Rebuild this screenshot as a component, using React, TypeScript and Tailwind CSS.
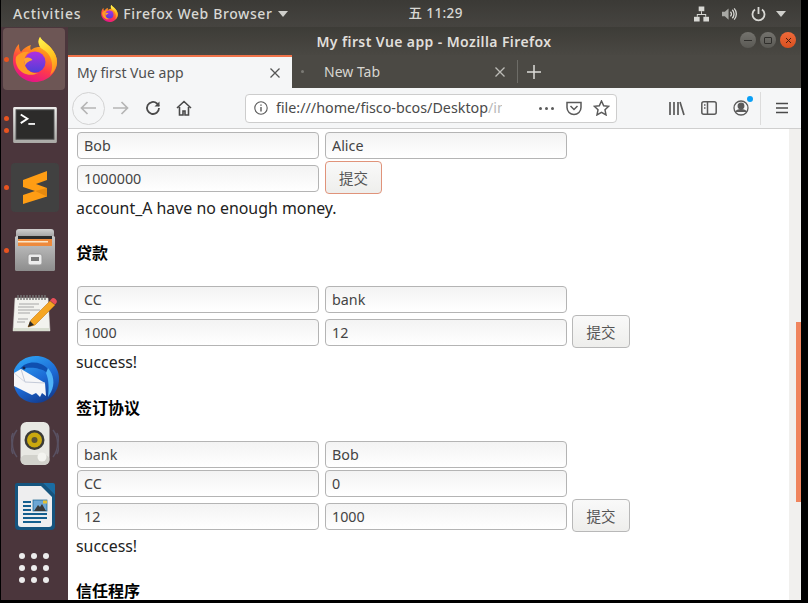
import type { ReactNode } from "react";

const uiFont = "font-['Noto_Sans','Noto_Sans_CJK_SC',sans-serif]";

function FirefoxLogo({ width, height, id }: { width: number; height: number; id: string }) {
  return (
    <svg width={width} height={height} viewBox="0 0 44 45">
      <defs>
        <linearGradient id={`${id}a`} x1="0.75" y1="0" x2="0.35" y2="1">
          <stop offset="0" stopColor="#ffd52e" />
          <stop offset="0.35" stopColor="#ff8a1f" />
          <stop offset="0.65" stopColor="#ff3b4a" />
          <stop offset="1" stopColor="#e3128c" />
        </linearGradient>
        <linearGradient id={`${id}b`} x1="0.5" y1="0" x2="0.5" y2="1">
          <stop offset="0" stopColor="#b02fe0" />
          <stop offset="1" stopColor="#4f3fd8" />
        </linearGradient>
        <linearGradient id={`${id}c`} x1="0.4" y1="0" x2="0.7" y2="1">
          <stop offset="0" stopColor="#fff04a" />
          <stop offset="0.55" stopColor="#ffc21f" />
          <stop offset="1" stopColor="#ff8a1f" />
        </linearGradient>
      </defs>
      <path
        d="M6 7C6 11 6.500 13 8 15C11 11 14 9 18 8C17 10 17 12 18 13C22 10 24 10 27 10C25 6 25 3 27 0C30 5 34 6 38 11C42 16 44 20 44 25C44 36 34 45 22 45C10 45 0 35 0 24C0 17 2 11 6 7Z"
        fill={`url(#${id}a)`}
      />
      <path d="M27 0C30 5 34 6 38 11C42 16 44 20 44 25C44 30 41 35 37 38C40 32 40 24 36 18C33 13 28 12 27 10C25 6 25 3 27 0Z" fill={`url(#${id}c)`} />
      <path d="M3 20C6 16 11 14 16 15C12 18 11 22 12 27C13 33 19 37 25 36C17 40 9 37 5 31C3 27 2 24 3 20Z" fill="#ff9a24" />
      <circle cx="22" cy="25" r="10.500" fill={`url(#${id}b)`} />
      <path d="M11 22C14 19.500 18 20.500 19.500 23C15.500 24 13 26 12 28.500Z" fill="#ffa436" />
    </svg>
  );
}

function TerminalIcon() {
  return (
    <svg width="46" height="38" viewBox="0 0 48 40">
      <defs>
        <linearGradient id="termFrame" x1="0" y1="0" x2="0" y2="1">
          <stop offset="0" stopColor="#eeeeec" />
          <stop offset="1" stopColor="#a9a9a5" />
        </linearGradient>
      </defs>
      <rect x="1" y="1" width="46" height="38" rx="1.500" fill="url(#termFrame)" />
      <rect x="4" y="4" width="40" height="31" fill="#2c2b2a" stroke="#555" />
      <path d="M9 9l7 4.500-7 4.500" fill="none" stroke="#fff" strokeWidth="2" />
      <rect x="17" y="18" width="7" height="1.800" fill="#fff" />
    </svg>
  );
}

function SublimeIcon() {
  return (
    <svg width="48" height="49" viewBox="0 0 48 49">
      <rect width="48" height="49" rx="4" fill="#414141" />
      <path d="M12 17L36 8V17L25 21L36 25V33.500L12 41V32L24 28L12 24Z" fill="#ff9d14" />
      <path d="M24 28L36 25V33.500Z" fill="#e5890f" />
    </svg>
  );
}

function FilesIcon() {
  return (
    <svg width="42" height="44" viewBox="0 0 42 44">
      <defs>
        <linearGradient id="cabTop" x1="0" y1="0" x2="0" y2="1">
          <stop offset="0" stopColor="#cfcfcf" />
          <stop offset="1" stopColor="#8f8f8f" />
        </linearGradient>
        <linearGradient id="cabFront" x1="0" y1="0" x2="0" y2="1">
          <stop offset="0" stopColor="#c8c8c8" />
          <stop offset="1" stopColor="#8d8d8d" />
        </linearGradient>
      </defs>
      <path d="M2 4q0-3 3-3h32q3 0 3 3v8H2z" fill="url(#cabTop)" />
      <rect x="1" y="8" width="40" height="35" rx="1.500" fill="url(#cabFront)" />
      <rect x="4" y="8" width="34" height="10" fill="#2b2b2b" />
      <rect x="4" y="11" width="34" height="7" fill="#ee8a3c" />
      <rect x="4" y="13" width="30" height="1.500" fill="#fbe6c8" />
      <rect x="14" y="26" width="14" height="11" rx="2" fill="#ececec" stroke="#9a9a9a" />
      <rect x="17" y="29" width="8" height="4" fill="#7a7a7a" />
    </svg>
  );
}

function GeditIcon() {
  return (
    <svg width="46" height="38" viewBox="0 0 46 38">
      <path d="M3 3h33l2 33H1z" fill="#f2f2ee" stroke="#cfcfcb" strokeWidth="0.500" />
      <rect x="1" y="33" width="36" height="3" fill="#d8ddd0" />
      <path d="M6 0v5M9 0v5M12 0v5M15 0v5M18 0v5M21 0v5M24 0v5M27 0v5M30 0v5M33 0v5" stroke="#777" strokeWidth="1.400" />
      <path d="M7 9h20M6 12h16M6 15h22M6 18h12M6 24h10M5 27h8M19 27h6" stroke="#a6a6a6" strokeWidth="1" />
      <path d="M38 6l5 4-20 20-7 2 3-7z" fill="#f5a623" stroke="#c87a13" strokeWidth="0.600" />
      <path d="M39 4.500a3 3 0 0 1 5 4l-1 1-5-4z" fill="#e9505a" />
      <path d="M18 26l-2 6 6-2z" fill="#2b2b2b" />
    </svg>
  );
}

function ThunderbirdIcon() {
  return (
    <svg width="48" height="47" viewBox="0 0 48 47">
      <defs>
        <linearGradient id="tbBlue" x1="0.2" y1="0" x2="0.7" y2="1">
          <stop offset="0" stopColor="#2ea3f5" />
          <stop offset="0.55" stopColor="#1c69d4" />
          <stop offset="1" stopColor="#123a8c" />
        </linearGradient>
      </defs>
      <path d="M3 14C7 5 15 0 25 0C38 0 48 10 48 23C48 36 38 47 25 47C18 47 12 44 8 40C5 36 3 32 3 28Z" fill="url(#tbBlue)" />
      <path d="M9 13C13 7 22 5 30 8C37 11 41 17 42 25C39 18 34 14 28 13C22 11 15 12 9 13Z" fill="#0f4fb0" />
      <path d="M37 12C43 19 44 28 40 36L37 41C38 33 38 24 35 17Z" fill="#4fb2f7" />
      <path d="M3 17L10 13L34 27L35 40L31 37L29 41L25 37L21 39L3 30Z" fill="#f6f6f8" />
      <path d="M10 13L14 26L34 27" fill="none" stroke="#c4cad8" strokeWidth="1" />
      <path d="M3 17L14 26" stroke="#d3d7e1" strokeWidth="1" />
      <circle cx="13" cy="12" r="1.500" fill="#17254f" />
    </svg>
  );
}

function SpeakerIcon() {
  return (
    <svg width="48" height="43" viewBox="0 0 48 43">
      <path d="M6 8a22 22 0 0 0 0 27M2 11a26 26 0 0 0 0 21M42 8a22 22 0 0 1 0 27M46 11a26 26 0 0 1 0 21" fill="none" stroke="#6d7a9c" strokeWidth="1.500" opacity="0.4" />
      <rect x="9.500" y="0" width="29" height="43" rx="6" fill="#e8e8e3" />
      <rect x="9.500" y="33" width="29" height="10" rx="5" fill="#d2d2cc" />
      <circle cx="23.500" cy="18" r="10" fill="#3b3b38" />
      <circle cx="23.500" cy="18" r="7.500" fill="#c9a80f" />
      <circle cx="23.500" cy="18" r="3" fill="#5a5334" />
      <circle cx="31" cy="35" r="4.500" fill="#f4f4f0" />
    </svg>
  );
}

function WriterIcon() {
  return (
    <svg width="40" height="47" viewBox="0 0 40 47">
      <path d="M2 0h26l12 12v31q0 4-4 4H4q-4 0-4-4V2q0-2 2-2z" fill="#15557f" />
      <path d="M28 0h10q2 0 2 2v10z" fill="#1a6da3" />
      <path d="M3 3h23l11 11v27q0 3-3 3H6q-3 0-3-3z" fill="#eeeeef" />
      <rect x="8" y="18" width="8" height="2" fill="#15608f" />
      <rect x="8" y="22" width="8" height="2" fill="#15608f" />
      <rect x="8" y="26" width="8" height="2" fill="#15608f" />
      <rect x="8" y="30" width="24" height="2" fill="#15608f" />
      <rect x="8" y="34" width="24" height="2" fill="#15608f" />
      <rect x="8" y="38" width="18" height="2" fill="#15608f" />
      <rect x="18" y="17" width="14" height="11" fill="#6ca6d4" stroke="#15608f" strokeWidth="0.700" />
      <path d="M19 28l4-6 2 2 2-3 4 7z" fill="#3a3a3a" />
      <rect x="28" y="17.500" width="4" height="3" fill="#e6c233" />
    </svg>
  );
}

function AppsGrid() {
  return (
    <div className="ml-[-1px] grid grid-cols-3 gap-[6px]">
      {Array.from({ length: 9 }).map((_, i) => (
        <span key={i} className="h-[6px] w-[6px] rounded-full bg-[#ececec]" />
      ))}
    </div>
  );
}

function DockItem({
  dots = 0,
  active,
  height,
  children,
}: {
  dots?: number;
  active?: boolean;
  height: string;
  children: ReactNode;
}) {
  return (
    <div className={`relative flex shrink-0 items-center justify-center ${height}`}>
      {active && <div className="absolute left-[2px] top-0 h-[62px] w-[62px] rounded-[4px] bg-[#6d5655]" />}
      {dots > 0 && (
        <div className="absolute left-[3px] top-0 flex h-full flex-col justify-center gap-[7px]">
          {Array.from({ length: dots }).map((_, i) => (
            <span key={i} className="h-[5px] w-[5px] rounded-full bg-[#e95420]" />
          ))}
        </div>
      )}
      <div className="relative flex items-center justify-center">{children}</div>
    </div>
  );
}

function Dock() {
  return (
    <aside className="flex w-[67px] shrink-0 flex-col bg-[#4b363c] pt-px">
      <DockItem dots={1} active height="h-[62px]">
        <FirefoxLogo width={44} height={45} id="dockfx" />
      </DockItem>
      <DockItem dots={2} height="h-[69px]">
        <TerminalIcon />
      </DockItem>
      <DockItem dots={1} height="h-[56px]">
        <SublimeIcon />
      </DockItem>
      <DockItem dots={1} height="h-[70px]">
        <FilesIcon />
      </DockItem>
      <DockItem height="h-[57px]">
        <GeditIcon />
      </DockItem>
      <DockItem height="h-[74px]">
        <ThunderbirdIcon />
      </DockItem>
      <DockItem height="h-[55px]">
        <SpeakerIcon />
      </DockItem>
      <DockItem height="h-[71px]">
        <WriterIcon />
      </DockItem>
      <DockItem height="h-[52px]">
        <AppsGrid />
      </DockItem>
    </aside>
  );
}

function TopBar() {
  return (
    <header className="flex h-[27px] shrink-0 items-center bg-gradient-to-b from-[#3b3a36] to-[#464440] pl-[12px] pr-[15px] text-[14px] font-medium text-[#d8d8d4]">
      <span className="tracking-[0.8px]">Activities</span>
      <span className="ml-[20px] flex items-center gap-[5px] tracking-[0.6px]">
        <FirefoxLogo width={17} height={17} id="panelfx" />
        Firefox Web Browser
        <svg width="10" height="6" viewBox="0 0 10 6" className="ml-px">
          <path d="M0 0h10L5 6z" fill="#cfcfcb" />
        </svg>
      </span>
      <span className="ml-[120px] flex items-center text-[13.500px] tracking-[0.4px]">五 11:29</span>
      <span className="ml-auto flex items-center">
        <svg width="15" height="16" viewBox="0 0 16 16" fill="#d8d8d4">
          <rect x="5" y="0" width="6" height="5" />
          <rect x="0" y="11" width="6" height="5" />
          <rect x="10" y="11" width="6" height="5" />
          <path d="M7.500 5h1v3H13v3h-1V9H4v2H3V8h4.500z" />
        </svg>
        <svg className="ml-[13px]" width="15" height="14" viewBox="0 0 16 14" fill="none" stroke="#d8d8d4">
          <path d="M0 4.500h3L7 1v12L3 9.500H0z" fill="#a8a8a4" stroke="none" />
          <path d="M9 4.500a3.500 3.500 0 0 1 0 5M11 2.500a6.500 6.500 0 0 1 0 9M13 1a9 9 0 0 1 0 12" strokeWidth="1.400" />
        </svg>
        <svg className="ml-[14px]" width="15" height="16" viewBox="0 0 15 16" fill="none" stroke="#d8d8d4" strokeWidth="1.800">
          <path d="M7.500 1v7" />
          <path d="M4 3.500a6 6 0 1 0 7 0" />
        </svg>
        <svg className="ml-[10px]" width="10" height="6" viewBox="0 0 10 6">
          <path d="M0 0h10L5 6z" fill="#cfcfcb" />
        </svg>
      </span>
    </header>
  );
}

function WindowButton({ color, children }: { color: string; children: ReactNode }) {
  return (
    <span className={`flex h-[16px] w-[16px] items-center justify-center rounded-full ${color}`}>{children}</span>
  );
}

function TitleBar() {
  return (
    <div className="relative flex h-[28px] shrink-0 items-center justify-center bg-gradient-to-b from-[#3d3c37] to-[#4a4843] text-[14px] font-semibold tracking-[0.4px] text-[#e0dfdb]">
      <span className="ml-[-1px]">My first Vue app - Mozilla Firefox</span>
      <div className="absolute right-[5px] top-[5px] flex gap-[4px]">
        <WindowButton color="bg-gradient-to-b from-[#74736e] to-[#5a5954]">
          <span className="h-px w-[8px] bg-[#2f2e2b]" />
        </WindowButton>
        <WindowButton color="bg-gradient-to-b from-[#74736e] to-[#5a5954]">
          <span className="h-[7px] w-[8px] rounded-[1px] border border-[#2f2e2b]" />
        </WindowButton>
        <WindowButton color="bg-gradient-to-b from-[#ef6a3a] to-[#d9501f]">
          <svg width="7" height="7" viewBox="0 0 7 7" stroke="#4a1c0c" strokeWidth="1">
            <path d="M1 1l5 5M6 1L1 6" />
          </svg>
        </WindowButton>
      </div>
    </div>
  );
}

function CloseGlyph({ color }: { color: string }) {
  return (
    <svg width="10" height="10" viewBox="0 0 10 10" stroke={color} strokeWidth="1.300">
      <path d="M0.500 0.500l9 9M9.500 0.500l-9 9" />
    </svg>
  );
}

function TabStrip() {
  return (
    <div className="flex h-[33px] shrink-0 items-stretch bg-[#4b4944] text-[14px]">
      <div className="flex w-[224px] items-center justify-between border-t-2 border-[#f0734a] bg-[#f5f6f7] pl-[9px] pr-[12px] text-[#4f4f4f]">
        <span>My first Vue app</span>
        <CloseGlyph color="#555" />
      </div>
      <div className="flex w-[224px] items-center justify-between pl-[9px] pr-[11px] text-[#d7d6d1]">
        <span className="flex items-center">
          <span className="h-[3px] w-[3px] rounded-full bg-[#7b7a75]" />
          <span className="ml-[20px]">New Tab</span>
        </span>
        <CloseGlyph color="#bdbcb8" />
      </div>
      <span className="my-[5px] ml-[1px] w-px bg-[#6d6c67]" />
      <span className="ml-[9px] flex items-center">
        <svg width="14" height="14" viewBox="0 0 14 14" stroke="#dddcd8" strokeWidth="1.500">
          <path d="M7 0v14M0 7h14" />
        </svg>
      </span>
    </div>
  );
}

function ToolIcon({ children, className }: { children: ReactNode; className?: string }) {
  return <span className={`flex items-center justify-center ${className ?? ""}`}>{children}</span>;
}

function Toolbar() {
  return (
    <div className="flex h-[41px] shrink-0 items-center border-b border-[#cfcfcf] bg-[#f5f6f7] pl-[4px] pr-[13px] text-[#4a4a4a]">
      <ToolIcon className="h-[33px] w-[33px] rounded-full border border-[#d3d3d3]">
        <svg width="17" height="14" viewBox="0 0 17 14" fill="none" stroke="#b5b5b5" strokeWidth="1.700">
          <path d="M16 7H2M7.500 1L1.500 7l6 6" />
        </svg>
      </ToolIcon>
      <ToolIcon className="ml-[7px]">
        <svg width="17" height="14" viewBox="0 0 17 14" fill="none" stroke="#b5b5b5" strokeWidth="1.700">
          <path d="M1 7h14M9.500 1l6 6-6 6" />
        </svg>
      </ToolIcon>
      <ToolIcon className="ml-[16px]">
        <svg width="16" height="16" viewBox="0 0 16 16" fill="none" stroke="#4a4a4a" strokeWidth="1.800">
          <path d="M14 8a6 6 0 1 1-2-4.500L14 6" />
          <path d="M14.500 1.500V6.500H9.500" fill="#4a4a4a" stroke="none" />
        </svg>
      </ToolIcon>
      <ToolIcon className="ml-[15px]">
        <svg width="16" height="16" viewBox="0 0 16 16" fill="none" stroke="#4a4a4a" strokeWidth="1.600">
          <path d="M1 8l7-6.500L15 8M3.500 7v8h3.500v-4h2v4h3.500V7" />
        </svg>
      </ToolIcon>
      <div className="ml-[53px] flex h-[29px] w-[372px] items-center rounded-[4px] border border-[#cdcdcd] bg-white pl-[8px] pr-[6px] text-[14.300px]">
        <svg width="14" height="14" viewBox="0 0 14 14" fill="none" stroke="#5a5a5a" strokeWidth="1.100" className="shrink-0">
          <circle cx="7" cy="7" r="6.200" />
          <path d="M7 6v4.500M7 3.500v1.200" strokeWidth="1.400" />
        </svg>
        <span className="ml-[8px] w-[226px] overflow-hidden whitespace-nowrap text-[#4a4a4a]">
          file:///home/fisco-bcos/Desktop
          <span className="text-[#b9b9b9]">/in</span>
        </span>
        <span className="ml-auto flex items-center">
          <span className="flex gap-[3px]">
            <span className="h-[3px] w-[3px] rounded-full bg-[#5a5a5a]" />
            <span className="h-[3px] w-[3px] rounded-full bg-[#5a5a5a]" />
            <span className="h-[3px] w-[3px] rounded-full bg-[#5a5a5a]" />
          </span>
          <svg className="ml-[12px]" width="16" height="15" viewBox="0 0 16 15" fill="none" stroke="#5a5a5a" strokeWidth="1.500">
            <path d="M1 1.500h14v5a7 7 0 0 1-14 0z" />
            <path d="M4.500 5l3.500 3.500L11.500 5" />
          </svg>
          <svg className="ml-[11px]" width="17" height="16" viewBox="0 0 17 16" fill="none" stroke="#5a5a5a" strokeWidth="1.500">
            <path d="M8.500 1l2.200 4.700 5 .6-3.700 3.500 1 5.100-4.500-2.500-4.500 2.500 1-5.100L1.300 6.300l5-.6z" />
          </svg>
        </span>
      </div>
      <div className="ml-auto flex items-center">
        <svg width="16" height="15" viewBox="0 0 16 15" stroke="#5a5a5a" strokeWidth="1.700">
          <path d="M1 1v13M5 1v13M9 1v13M11 1l4 13" />
        </svg>
        <svg className="ml-[16px]" width="16" height="14" viewBox="0 0 16 14" fill="none" stroke="#5a5a5a" strokeWidth="1.500">
          <rect x="0.800" y="0.800" width="14.400" height="12.400" rx="2" />
          <path d="M6.500 1v12M3 4h1.500M3 7h1.500" />
        </svg>
        <span className="relative ml-[16px] flex">
          <svg width="16" height="16" viewBox="0 0 16 16" fill="none" stroke="#5a5a5a" strokeWidth="1.300">
            <circle cx="8" cy="8" r="7" />
            <circle cx="8" cy="6" r="2.800" fill="#5a5a5a" />
            <path d="M3 12c1-3 9-3 10 0" fill="#5a5a5a" />
          </svg>
          <span className="absolute right-[-4px] top-[-4px] h-[6px] w-[6px] rounded-full bg-[#0a9ff5]" />
        </span>
        <span className="ml-[11px] h-[33px] w-px bg-[#dcdcdc]" />
        <svg className="ml-[15px]" width="12" height="12" viewBox="0 0 12 12" stroke="#4a4a4a" strokeWidth="1.700">
          <path d="M0 1.500h12M0 6h12M0 10.500h12" />
        </svg>
      </div>
    </div>
  );
}

function Field({ value }: { value: string }) {
  return (
    <input
      readOnly
      value={value}
      className="h-[26.500px] w-[242px] shrink-0 rounded-[4px] border border-[#b4b4b4] bg-gradient-to-b from-[#f3f3f3] to-white pl-[6px] text-[14.300px] text-[#444]"
    />
  );
}

function Row({ values }: { values: string[] }) {
  return (
    <div className="ml-px flex h-[29px] gap-[6px]">
      {values.map((v, i) => (
        <Field key={i} value={v} />
      ))}
    </div>
  );
}

function SubmitRow({ values, focused }: { values: string[]; focused?: boolean }) {
  return (
    <div className="ml-px flex h-[33px] items-start gap-[6px]">
      {values.map((v, i) => (
        <div key={i} className="mt-[4px]">
          <Field value={v} />
        </div>
      ))}
      <button
        className={`h-[32.500px] rounded-[4px] border bg-gradient-to-b from-[#f9f9f9] to-[#eeeeec] pt-[3px] text-[14.500px] text-[#555] ${
          focused ? "w-[57px] border-[#e0937a]" : "ml-[-1px] w-[58px] border-[#b8b8b8]"
        }`}
      >
        提交
      </button>
    </div>
  );
}

function Heading({ children, tight }: { children: ReactNode; tight?: boolean }) {
  return (
    <h3 className={`mb-[21px] h-[24px] text-[16px] font-bold leading-[24px] text-black ${tight ? "mt-[19px]" : "mt-[20px]"}`}>
      {children}
    </h3>
  );
}

function Result({ children, short }: { children: ReactNode; short?: boolean }) {
  return (
    <p className={`text-[15.900px] text-[#222] ${short ? "h-[27px] leading-[29px]" : "h-[28px] leading-[28px]"}`}>
      {children}
    </p>
  );
}

function PageContent() {
  return (
    <main className="min-h-0 flex-1 overflow-hidden bg-white pl-[8px] pt-[3px]">
      <Row values={["Bob", "Alice"]} />
      <SubmitRow values={["1000000"]} focused />
      <Result short>account_A have no enough money.</Result>
      <Heading>贷款</Heading>
      <Row values={["CC", "bank"]} />
      <SubmitRow values={["1000", "12"]} />
      <Result>success!</Result>
      <Heading>签订协议</Heading>
      <Row values={["bank", "Bob"]} />
      <Row values={["CC", "0"]} />
      <SubmitRow values={["12", "1000"]} />
      <Result>success!</Result>
      <Heading tight>信任程序</Heading>
    </main>
  );
}

function Scrollbar() {
  return (
    <div className="w-[12px] shrink-0 bg-[#f1f0ee] pl-[7px] pt-[193px]">
      <div className="h-[180px] w-[5px] bg-[#f0855e]" />
    </div>
  );
}

export default function App() {
  return (
    <div className={`flex h-[603px] w-[808px] flex-col overflow-hidden bg-black pb-[3px] pl-px pr-[7px] ${uiFont}`}>
      <TopBar />
      <div className="flex min-h-0 flex-1">
        <Dock />
        <div className="flex min-w-0 flex-1 flex-col">
          <TitleBar />
          <TabStrip />
          <Toolbar />
          <div className="flex min-h-0 flex-1">
            <PageContent />
            <Scrollbar />
          </div>
        </div>
      </div>
    </div>
  );
}
